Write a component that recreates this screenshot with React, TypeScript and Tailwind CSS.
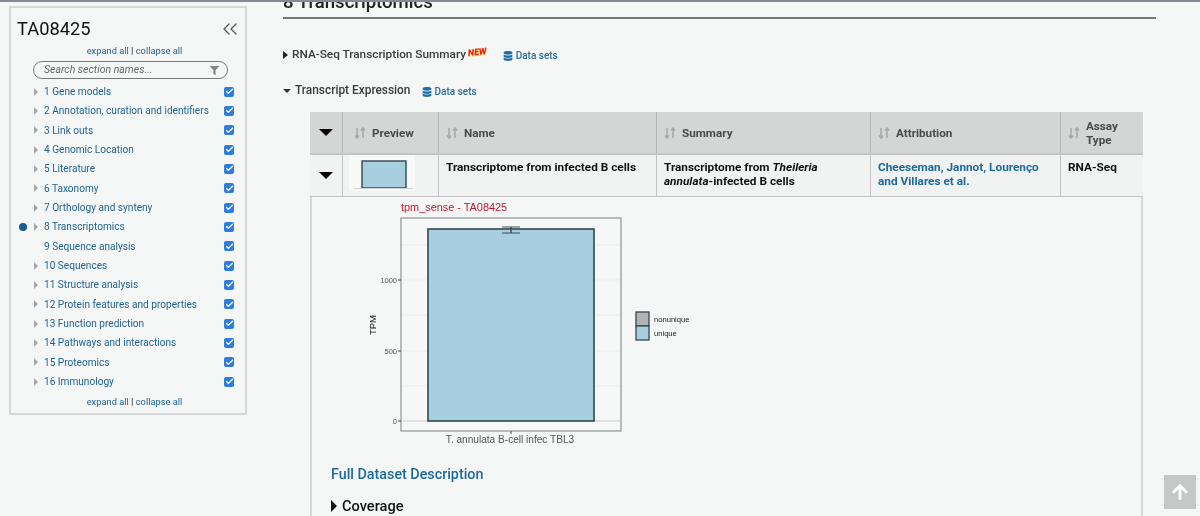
import { Check, ChevronsLeft } from "lucide-react";
import { FaArrowUp, FaDatabase, FaFilter } from "react-icons/fa";

const sections = [
  { label: "1 Gene models", arrow: true },
  { label: "2 Annotation, curation and identifiers", arrow: true },
  { label: "3 Link outs", arrow: true },
  { label: "4 Genomic Location", arrow: true },
  { label: "5 Literature", arrow: true },
  { label: "6 Taxonomy", arrow: true },
  { label: "7 Orthology and synteny", arrow: true },
  { label: "8 Transcriptomics", arrow: true, current: true },
  { label: "9 Sequence analysis", arrow: false },
  { label: "10 Sequences", arrow: true },
  { label: "11 Structure analysis", arrow: true },
  { label: "12 Protein features and properties", arrow: true },
  { label: "13 Function prediction", arrow: true },
  { label: "14 Pathways and interactions", arrow: true },
  { label: "15 Proteomics", arrow: true },
  { label: "16 Immunology", arrow: true },
];

function ExpandLinks() {
  return (
    <div className="pl-[13px] text-center text-[9.3px] leading-[14px] text-[#1f6391]">
      expand all <span className="font-bold text-[#333]">|</span> collapse all
    </div>
  );
}

function SortIcon() {
  return (
    <svg width="12" height="14" viewBox="0 0 12 14" className="shrink-0 text-[#a8a8a8]" fill="none" stroke="currentColor" strokeWidth="1.5">
      <path d="M3 2v10M1 9.5l2 2.6 2-2.6" />
      <path d="M9 12V2M7 4.5l2-2.6 2 2.6" />
    </svg>
  );
}

function Caret() {
  return <div className="h-0 w-0 border-x-[7px] border-t-[7px] border-x-transparent border-t-black" />;
}

function DataSets() {
  return (
    <span className="flex items-center gap-[3px] pt-[1px] text-[10px] font-medium text-[#2a6e9e]">
      <FaDatabase className="text-[10px] text-[#1f6fa5]" />
      Data sets
    </span>
  );
}

function HeadCell({ label, border = true, pad = "pl-[7px]" }: { label: string; border?: boolean; pad?: string }) {
  return (
    <div className={`flex items-center gap-[6px] text-[11.7px] font-bold leading-[14px] text-[#4a4a4a] ${pad} ${border ? "border-r border-[#b4b6b6]" : ""}`}>
      <SortIcon />
      <span>{label}</span>
    </div>
  );
}

function Chart() {
  return (
    <svg width="370" height="250" viewBox="0 0 370 250" className="block" style={{ fontFamily: "Liberation Sans, sans-serif" }}>
      <text x="61" y="13" fontSize="10.9" fill="#c2182c">tpm_sense - TA08425</text>
      <g transform="translate(0 -3)">
        <rect x="61" y="23" width="220" height="213" fill="#f6f8f8" stroke="#8f9494" strokeWidth="1.2" />
        <g stroke="#ebeded" strokeWidth="1">
          <line x1="62" x2="280" y1="50" y2="50" />
          <line x1="62" x2="280" y1="85" y2="85" />
          <line x1="62" x2="280" y1="120" y2="120" />
          <line x1="62" x2="280" y1="156" y2="156" />
          <line x1="62" x2="280" y1="191" y2="191" />
        </g>
        <line x1="62" x2="280" y1="226" y2="226" stroke="#c9cbcb" strokeWidth="1.2" />
        <rect x="88" y="34" width="166" height="192" fill="#a7cfdf" stroke="#34474f" strokeWidth="1.6" />
        <g stroke="#3b4a50" strokeWidth="1">
          <line x1="162" x2="180" y1="32" y2="32" />
          <line x1="162" x2="180" y1="38" y2="38" />
          <line x1="171" x2="171" y1="32" y2="38" strokeWidth="1.4" />
          <line x1="58" x2="61" y1="85" y2="85" />
          <line x1="58" x2="61" y1="156" y2="156" />
          <line x1="58" x2="61" y1="226" y2="226" />
          <line x1="171" x2="171" y1="236" y2="239" />
        </g>
        <g fontSize="7.5" fill="#555" textAnchor="end">
          <text x="57" y="88">1000</text>
          <text x="57" y="159">500</text>
          <text x="57" y="229">0</text>
        </g>
        <text transform="translate(36 130) rotate(-90)" fontSize="9.5" fill="#111" textAnchor="middle">TPM</text>
        <text x="170" y="248" fontSize="10.1" fill="#555" textAnchor="middle">T. annulata B-cell infec TBL3</text>
        <rect x="296" y="117" width="13" height="14" fill="#b3b3b3" stroke="#34474f" strokeWidth="1.3" />
        <rect x="296" y="131" width="13" height="14" fill="#a7cfdf" stroke="#34474f" strokeWidth="1.3" />
        <g fontSize="7.6" fill="#222">
          <text x="314" y="127">nonunique</text>
          <text x="314" y="141">unique</text>
        </g>
      </g>
    </svg>
  );
}

export default function App() {
  return (
    <div className="relative flex h-[516px] w-[1200px] overflow-hidden border-t-2 border-[#8b8896] bg-[#f5f7f7] text-[#222] blur-[0.4px]" style={{ fontFamily: "Roboto, sans-serif" }}>
      <aside className="ml-[9px] mt-[4px] h-[409px] w-[238px] shrink-0 border-2 border-[#d6d8d8] px-[6px]">
        <div className="flex h-[33px] items-end justify-between">
          <h1 className="text-[18.3px] leading-[25px] text-[#111]">TA08425</h1>
          <ChevronsLeft size={24} strokeWidth={1.3} className="-mr-[3px] text-[#555]" />
        </div>
        <div className="mt-[3px]"><ExpandLinks /></div>
        <div className="ml-[16px] mr-[11px] mt-[3px] flex h-[18px] items-center justify-between rounded-full border border-[#777] pl-[10px] pr-[8px] text-[10.5px] italic text-[#666]">
          Search section names...
          <FaFilter className="text-[9px] text-[#888]" />
        </div>
        <ul className="mt-[3px]">
          {sections.map((s) => (
            <li key={s.label} className="flex h-[19.33px] items-center text-[10.1px] text-[#1f6391]">
              <span className="flex w-[17px] shrink-0 justify-start pl-[2px]">
                {s.current && <span className="h-[8px] w-[8px] rounded-full bg-[#155f92]" />}
              </span>
              <span className="flex w-[10px] shrink-0">
                {s.arrow && <span className="h-0 w-0 border-y-[4px] border-l-[4px] border-y-transparent border-l-[#a4a8aa]" />}
              </span>
              <span className="flex-1 whitespace-nowrap">{s.label}</span>
              <span className="mr-[5px] flex h-[10px] w-[10px] items-center justify-center rounded-[2px] bg-[#2b7de0]">
                <Check size={9} strokeWidth={3.5} className="text-white" />
              </span>
            </li>
          ))}
        </ul>
        <div className="mt-[4px]"><ExpandLinks /></div>
      </aside>

      <main className="ml-[36px] w-[873px] shrink-0">
        <h2 className="-mt-[14px] border-b-2 border-[#777] pb-[1px] text-[18.6px] font-medium leading-[28px] text-[#222]">8 Transcriptomics</h2>

        <div className="mt-[27px] flex h-[18px] items-center">
          <span className="mr-[4px] h-0 w-0 border-y-[4px] border-l-[5px] border-y-transparent border-l-[#222]" />
          <span className="text-[11.8px] font-medium text-[#3a3a3a]">RNA-Seq Transcription Summary</span>
          <span className="mb-[5px] ml-[2px] rotate-[-6deg] text-[9px] font-black italic leading-none text-[#e8231c] [text-shadow:0_1px_0_#f7d31c]">NEW</span>
          <span className="ml-[16px]"><DataSets /></span>
        </div>

        <div className="mt-[18px] flex h-[18px] items-center">
          <span className="mr-[4px] h-0 w-0 border-x-[4px] border-t-[4px] border-x-transparent border-t-[#333]" />
          <span className="text-[11.9px] font-medium text-[#3a3a3a]">Transcript Expression</span>
          <span className="ml-[11px]"><DataSets /></span>
        </div>

        <div className="ml-[27px] mt-[12px] w-[833px]">
          <div className="grid h-[43px] grid-cols-[33px_96px_218px_214px_190px_82px] border-b-2 border-[#c3c5c5] bg-[#d4d5d5]">
            <div className="flex items-center justify-center border-r border-[#b4b6b6]"><Caret /></div>
            <HeadCell label="Preview" pad="pl-[11px]" />
            <HeadCell label="Name" />
            <HeadCell label="Summary" />
            <HeadCell label="Attribution" />
            <HeadCell label="Assay Type" border={false} />
          </div>
          <div className="grid h-[42px] grid-cols-[33px_96px_218px_214px_190px_82px] border-b border-[#c3c5c5] bg-[#f1f2f2] text-[11.8px] font-bold leading-[14px] text-[#111]">
            <div className="flex items-center justify-center border-r border-[#c3c5c5]"><Caret /></div>
            <div className="border-r border-[#c3c5c5] pl-[6px]">
              <svg width="66" height="36" viewBox="0 0 66 36" className="block">
                <rect width="66" height="36" fill="#f8f9f9" />
                <rect x="13" y="6" width="44" height="27" fill="#a7cfdf" stroke="#34474f" strokeWidth="1.4" />
                <line x1="5" x2="64" y1="33.5" y2="33.5" stroke="#d0d3d3" />
              </svg>
            </div>
            <div className="border-r border-[#c3c5c5] pl-[7px] pt-[5px]">Transcriptome from infected B cells</div>
            <div className="border-r border-[#c3c5c5] pl-[7px] pr-[20px] pt-[5px]">
              Transcriptome from <i>Theileria annulata</i>-infected B cells
            </div>
            <div className="border-r border-[#c3c5c5] pl-[7px] pr-[8px] pt-[5px] text-[#1c6a9c]">Cheeseman, Jannot, Lourenço and Villares et al.</div>
            <div className="pl-[7px] pt-[5px]">RNA-Seq</div>
          </div>
          <div className="h-[330px] border-x-2 border-[#d6d8d8] pl-[28px] pt-[1px]">
            <Chart />
            <h3 className="-ml-[9px] mt-[17px] text-[14.3px] font-medium leading-[18px] text-[#1c6a9c]">Full Dataset Description</h3>
            <div className="-ml-[9px] mt-[14px] flex items-center gap-[5px] text-[14.6px] font-medium leading-[18px] text-[#111]">
              <span className="h-0 w-0 border-y-[6px] border-l-[6px] border-y-transparent border-l-[#111]" />
              Coverage
            </div>
          </div>
        </div>
      </main>

      <div className="absolute left-[1164px] top-[473px] flex h-[34px] w-[32px] items-center justify-center bg-[#c6c8c8]">
        <FaArrowUp className="text-[18px] text-white" />
      </div>
    </div>
  );
}
